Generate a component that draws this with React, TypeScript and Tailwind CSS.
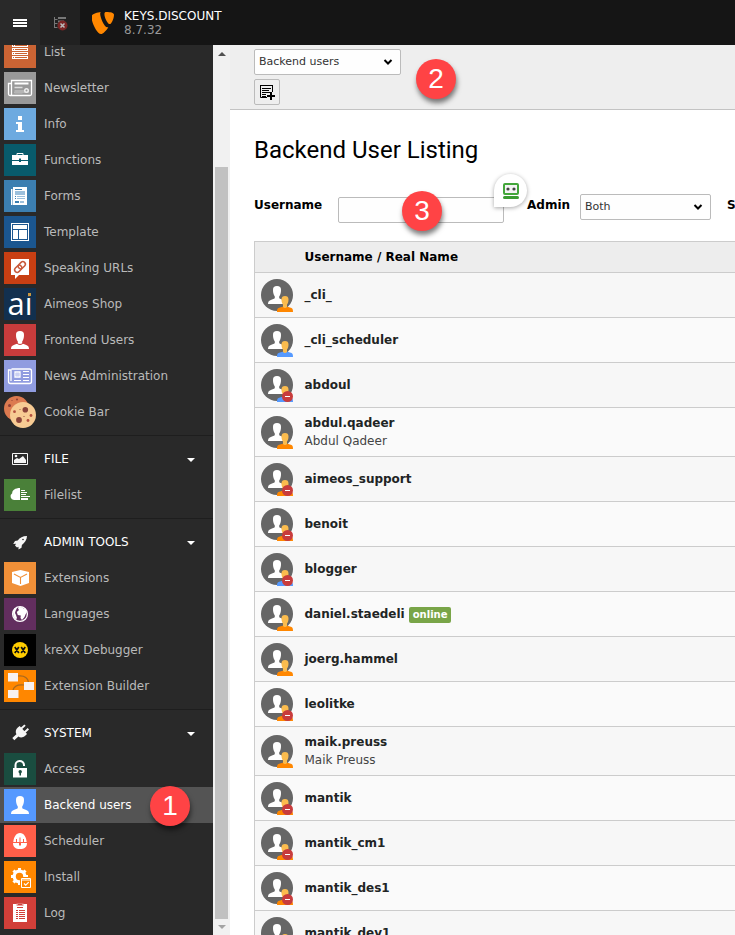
import type { ReactNode } from "react";

type Role = "admin" | "user";

interface BackendUser {
  name: string;
  realName?: string;
  role: Role;
  disabled?: boolean;
  online?: boolean;
}

interface ModuleItem {
  label: string;
  icon: ReactNode;
  active?: boolean;
}

interface ModuleGroup {
  title?: string;
  icon?: ReactNode;
  items: ModuleItem[];
}

const users: BackendUser[] = [
  { name: "_cli_", role: "admin" },
  { name: "_cli_scheduler", role: "user" },
  { name: "abdoul", role: "user", disabled: true },
  { name: "abdul.qadeer", realName: "Abdul Qadeer", role: "admin" },
  { name: "aimeos_support", role: "admin", disabled: true },
  { name: "benoit", role: "admin", disabled: true },
  { name: "blogger", role: "user", disabled: true },
  { name: "daniel.staedeli", role: "admin", online: true },
  { name: "joerg.hammel", role: "admin" },
  { name: "leolitke", role: "admin", disabled: true },
  { name: "maik.preuss", realName: "Maik Preuss", role: "admin" },
  { name: "mantik", role: "admin", disabled: true },
  { name: "mantik_cm1", role: "admin", disabled: true },
  { name: "mantik_des1", role: "admin", disabled: true },
  { name: "mantik_dev1", role: "admin", disabled: true },
];

function Glyph({ bg, children }: { bg?: string; children: ReactNode }) {
  return (
    <svg viewBox="0 0 32 32" className="size-8 shrink-0 overflow-visible" aria-hidden="true">
      {bg && <rect width="32" height="32" fill={bg} />}
      {children}
    </svg>
  );
}

const person =
  "M16 7c-2.800 0-4 1.200-4 3.800 0 1.200.1 2.200.3 3.200.3 1.500.9 2.600 1.500 3.400v1.700c-.7 1-2.300 1.300-4 1.800C7.600 21.600 7 22.800 7 25h18c0-2.200-.6-3.400-2.800-4.100-1.700-.5-3.300-.8-4-1.800v-1.700c.6-.8 1.200-1.900 1.500-3.400.2-1 .3-2 .3-3.200C20 8.200 18.800 7 16 7z";

const groups: ModuleGroup[] = [
  {
    items: [
      {
        label: "List",
        icon: (
          <Glyph bg="#cb6434">
            {[8, 12, 16, 20].map((y) => (
              <g key={y}>
                <rect x="8" y={y} width="16" height="3" fill="#fff" />
                <path d={`M9 ${y + 1.500}h1M11 ${y + 1.500}h12`} stroke="#cb6434" />
              </g>
            ))}
          </Glyph>
        ),
      },
      {
        label: "Newsletter",
        icon: (
          <Glyph bg="#999999">
            <path d="M7.500 8.500h20v13.500q0 1.500-1.500 1.500H7.500zM7.500 11.500h-3V22q0 1.500 1.500 1.500h2" fill="none" stroke="#fff" strokeWidth="1.300" />
            <path d="M10.500 11.500h14" stroke="#fff" strokeWidth="2" />
            <path d="M10.500 15.500h8M10.500 20.500h8" stroke="#ddd" strokeWidth="1.500" />
            <path d="M10.500 18h14v3h-14z" fill="#b5b5b5" />
            <circle cx="22.500" cy="18.500" r="2.500" fill="#eee" />
            <circle cx="22.500" cy="18.500" r="1" fill="#999" />
          </Glyph>
        ),
      },
      {
        label: "Info",
        icon: (
          <Glyph bg="#6daae0">
            <path d="M14 8h4v4h-4zM12 14h6v8h2v2h-8v-2h2v-6h-2z" fill="#fff" />
          </Glyph>
        ),
      },
      {
        label: "Functions",
        icon: (
          <Glyph bg="#085b6b">
            <path d="M13 11V9.500h6V11" fill="none" stroke="#fff" />
            <path d="M8 11h16v5h-7v-1.500h-2V16H8zM8 17h7v1h2v-1h7v4H8z" fill="#fff" />
          </Glyph>
        ),
      },
      {
        label: "Forms",
        icon: (
          <Glyph bg="#3c7fb1">
            <path d="M7 9h1.500v16H7zM9 7h14v18H9z" fill="#fff" />
            <path d="M11 9h7v1h-7zM11 16h1v1h-1zM11 18h1v1h-1zM11 21h4v2h-4z" fill="#3c7fb1" />
            <path d="M11 11h10v4H11zM13 16h8v1h-8zM13 18h8v1h-8zM16 21h4v2h-4z" fill="#9cc0dc" />
          </Glyph>
        ),
      },
      {
        label: "Template",
        icon: (
          <Glyph bg="#1b568f">
            <rect x="7.500" y="7.500" width="17" height="17" fill="none" stroke="#fff" />
            <path d="M9 9h14v4H9zM9 14h5v9H9zM15 14h8v9h-8z" fill="#fff" />
          </Glyph>
        ),
      },
      {
        label: "Speaking URLs",
        icon: (
          <Glyph bg="#c83f13">
            <path d="M7 7h18v16h-10l-4 4v-4H7z" fill="#fff" />
            <g fill="none" stroke="#c8593a" strokeWidth="1.500" transform="rotate(-45 16 15)">
              <rect x="9.500" y="12.500" width="8" height="5" rx="2.500" />
              <rect x="14.500" y="12.500" width="8" height="5" rx="2.500" />
            </g>
          </Glyph>
        ),
      },
      {
        label: "Aimeos Shop",
        icon: (
          <Glyph bg="#12304f">
            <text x="3.500" y="27" fill="#fff" fontSize="31" fontFamily="Open Sans, sans-serif">
              ai
            </text>
            <rect x="22" y="2" width="7" height="6.500" fill="#12304f" />
            <rect x="24" y="5" width="3" height="3" fill="#c9973f" />
          </Glyph>
        ),
      },
      {
        label: "Frontend Users",
        icon: (
          <Glyph bg="#c83c3c">
            <path d={person} fill="#fff" />
            <path d="M12 18.500q4 4 8 0" fill="none" stroke="#c83c3c" />
          </Glyph>
        ),
      },
      {
        label: "News Administration",
        icon: (
          <Glyph bg="#909ce0">
            <path d="M7.500 9h18q2 0 2 2v10.500q0 2-2 2h-19q-2 0-2-2V10H7v11" fill="none" stroke="#fff" strokeWidth="1.300" />
            <path d="M11 12h5v5h-5z" fill="none" stroke="#fff" strokeWidth="1.300" />
            <path d="M12 13h3v3h-3z" fill="#c9cff3" />
            <path d="M19 11.500h6M19 14.500h6M19 17.500h6M10 20.500h7M19 20.500h6" stroke="#fff" strokeWidth="1.200" />
          </Glyph>
        ),
      },
      {
        label: "Cookie Bar",
        icon: (
          <Glyph>
            <circle cx="12.500" cy="12.500" r="12.500" fill="#dc7a50" />
            <g fill="#8e3f35">
              <circle cx="5.500" cy="9.500" r="1.500" />
              <circle cx="13" cy="3.500" r="1" />
              <circle cx="8" cy="4.500" r=".6" />
            </g>
            <circle cx="19" cy="19" r="13" fill="#f7cb93" />
            <g fill="#8b443a">
              <circle cx="21.300" cy="13.700" r="2.800" />
              <circle cx="15" cy="24" r="2.900" />
              <circle cx="20" cy="20.500" r=".6" />
              <circle cx="16" cy="13.500" r=".5" />
            </g>
            <g fill="#b4503f">
              <circle cx="10.500" cy="15.700" r="1.400" />
              <circle cx="27" cy="19.500" r="1.400" />
              <circle cx="24" cy="24.500" r="1.400" />
            </g>
          </Glyph>
        ),
      },
    ],
  },
  {
    title: "FILE",
    icon: (
      <Glyph>
        <path d="M8.500 10.500h15v11h-15z" fill="none" stroke="#f5f5f5" />
        <path d="M10 20v-3l3-2 2 1 4-3 3 4v3z" fill="#f5f5f5" />
        <circle cx="12" cy="13" r="1.300" fill="#f5f5f5" />
      </Glyph>
    ),
    items: [
      {
        label: "Filelist",
        icon: (
          <Glyph bg="#4a8039">
            <path d="M16 21h-6a3.700 3.700 0 0 1-1.800-6.800c0-3 3-5.200 7.800-5.200z" fill="#fff" />
            <path d="M17 11.500h4M17 13.500h6M17 15.500h5M17 17.500h9M17 19.500h7" stroke="#fff" />
            <path d="M17 20h7v1h-7z" fill="#fff" />
          </Glyph>
        ),
      },
    ],
  },
  {
    title: "ADMIN TOOLS",
    icon: (
      <Glyph>
        <path d="M23 10c-4.500 0-7 1.500-9.300 4.600l-2.700.4L9.200 18l2.800-.2-1 1.700 2 2 1.500-.8V23.500l3-1.800.4-2.800C21 16.500 22.800 14 23 10z" fill="#f5f5f5" />
        <circle cx="19" cy="13.500" r=".8" fill="#292929" />
      </Glyph>
    ),
    items: [
      {
        label: "Extensions",
        icon: (
          <Glyph bg="#f09038">
            <path d="M16.500 8 25 10v11l-8.500 3L8 21V10z" fill="#fff" />
            <path d="M10 12l6.500 3.500L23 12M16.500 15.500V22" fill="none" stroke="#f09038" strokeWidth="1.100" />
          </Glyph>
        ),
      },
      {
        label: "Languages",
        icon: (
          <Glyph bg="#622e5f">
            <circle cx="16" cy="16" r="7.400" fill="none" stroke="#fff" strokeWidth="1.300" />
            <path d="M15 9l3.500.2 1 1.300 2.500 1 .8 2.500-1.300 2.500-1 2.500-2.500 3-1.500-2 .3-2.500-3-.5-1-3 2.200-2-1-1.500zM9 13l1.500-2.500L13 10l-1.500 3L11 15l1 2 1 3-1 1.500L9.500 19z" fill="#fff" />
          </Glyph>
        ),
      },
      {
        label: "kreXX Debugger",
        icon: (
          <Glyph bg="#000000">
            <circle cx="16" cy="16" r="8" fill="#fc0" />
            <path d="M10.800 13l4 6M14.800 13l-4 6M17.200 13l4 6M21.200 13l-4 6" stroke="#111" strokeWidth="1.700" />
          </Glyph>
        ),
      },
      {
        label: "Extension Builder",
        icon: (
          <Glyph bg="#ff8700">
            <path d="M14 6q9-1 10.500 6M9 20q1.500-6 11-5" fill="none" stroke="#a8691f" strokeWidth="1.200" />
            <path d="M4 3h10v8.500H4zM20 12h10v8H20zM4 20h10.500v8H4z" fill="#f7f1f0" />
          </Glyph>
        ),
      },
    ],
  },
  {
    title: "SYSTEM",
    icon: (
      <Glyph>
        <g transform="rotate(48 16 16)" fill="#f5f5f5">
          <path d="M12.500 7h2v5h-2zM17.500 7h2v5h-2zM10.500 11.500h11v2.500c0 3-1.700 5-4 5.500V25h-3v-5.500c-2.300-.5-4-2.500-4-5.500z" />
        </g>
      </Glyph>
    ),
    items: [
      {
        label: "Access",
        icon: (
          <Glyph bg="#1a4d40">
            <path d="M11.500 15v-2.500a4 4 0 0 1 8.500-.5v1" fill="none" stroke="#fff" strokeWidth="2" />
            <path d="M9 15h14v9.500H9z" fill="#fff" />
            <path d="M15.500 20h1.500v2.500h-1.500z" fill="#1a4d40" />
            <circle cx="16.200" cy="18.800" r="1.700" fill="#1a4d40" />
          </Glyph>
        ),
      },
      {
        label: "Backend users",
        active: true,
        icon: (
          <Glyph bg="#5599ff">
            <path d={person} fill="#fff" />
          </Glyph>
        ),
      },
      {
        label: "Scheduler",
        icon: (
          <Glyph bg="#ff5f49">
            <path d="M16 8c4 0 6.200 4 6.700 9H9.300C9.800 12 12 8 16 8zM9 18h6v2.500h2V18h6c0 4-2.500 6-7 6s-7-2-7-6z" fill="#fff" />
            <path d="M12.500 14v3M16 12.500v4.500M19.500 14v3" stroke="#ff5f49" />
          </Glyph>
        ),
      },
      {
        label: "Install",
        icon: (
          <Glyph bg="#ff8700">
            <circle cx="15.500" cy="15.500" r="5.300" fill="none" stroke="#fff" strokeWidth="3.200" />
            <g stroke="#fff" strokeWidth="3">
              {[0, 45, 90, 135].map((a) => (
                <path key={a} d="M15.500 7v3M15.500 21v3" transform={`rotate(${a} 15.500 15.500)`} />
              ))}
            </g>
            <path d="M16 16h16v16H16z" fill="#ff8700" />
            <path d="M17.500 17.500h9v9h-9zM17.500 19h9" fill="none" stroke="#fff" />
            <path d="M20 22.500l1.700 1.700 3-3" fill="none" stroke="#fff" strokeWidth="1.200" />
          </Glyph>
        ),
      },
      {
        label: "Log",
        icon: (
          <Glyph bg="#d13f39">
            <path d="M9 7h14v18H9z" fill="#fff" />
            <path d="M12.500 6.500h7V9h-7z" fill="#e99c98" />
            <path d="M14 7h4v1h-4z" fill="#d13f39" />
            <path d="M12 13.500h2M15 13.500h6M12 15.500h2M15 15.500h6M12 17.500h2M15 17.500h6M12 19.500h2M15 19.500h6M12 21.500h2M15 21.500h6M13 10.500h6" stroke="#d13f39" />
          </Glyph>
        ),
      },
    ],
  },
];

function ModuleMenu() {
  return (
    <nav aria-label="Modules" className="-mt-[11px] w-[213px] shrink-0 bg-[#292929]">
      {groups.map((group, i) => (
        <div key={i} className={group.title ? "border-t border-[#1e1e1e] py-[5px]" : "pb-[5px]"}>
          {group.title && (
            <button type="button" className="flex h-9 w-full items-center gap-2 pr-[18px] pl-1 text-left text-white">
              {group.icon}
              <span className="grow">{group.title}</span>
              <span className="mt-0.5 border-x-4 border-t-4 border-x-transparent border-t-white" />
            </button>
          )}
          <ul>
            {group.items.map((item) => (
              <li key={item.label}>
                <a
                  href="#"
                  className={
                    item.active
                      ? "flex h-9 items-center gap-2 bg-[#545454] pl-1 text-white"
                      : "flex h-9 items-center gap-2 pl-1 text-[#bababa]"
                  }
                >
                  {item.icon}
                  {item.label}
                </a>
              </li>
            ))}
          </ul>
        </div>
      ))}
    </nav>
  );
}

function MenuScrollbar() {
  return (
    <div className="flex w-[17px] shrink-0 flex-col items-center bg-[#f1f1f1] py-1.5" aria-hidden="true">
      <span className="mt-px border-x-4 border-b-4 border-x-transparent border-b-[#505050]" />
      <span className="mt-[111px] w-[13px] grow bg-[#c1c1c1]" />
      <span className="mt-1.5 border-x-4 border-t-4 border-x-transparent border-t-[#a3a3a3]" />
    </div>
  );
}

function TopBar() {
  return (
    <header className="flex h-[45px] shrink-0 bg-[#151515]">
      <button type="button" aria-label="Toggle module menu" className="flex w-10 items-center justify-center bg-[#292929]">
        <svg viewBox="0 0 14 8" className="h-2 w-3.5">
          <path d="M0 1h14M0 4h14M0 7h14" stroke="#fff" strokeWidth="2" />
        </svg>
      </button>
      <button type="button" aria-label="Toggle page tree" className="flex w-10 items-center justify-center bg-[#212121]">
        <svg viewBox="0 0 16 16" className="size-4" fill="none">
          <path d="M2.500 2v11M2.500 4.500h3M2.500 8.500h3M2.500 12.500h3" stroke="#777" />
          <path d="M6 3h8M6 6.500h6" stroke="#777" strokeWidth="2" />
          <circle cx="10.500" cy="10.500" r="5" fill="#7a2525" />
          <path d="M8.500 8.500l4 4M12.500 8.500l-4 4" stroke="#bbb" strokeWidth="1.500" />
        </svg>
      </button>
      <a href="#" className="flex items-center gap-2.5 pl-3 text-white">
        <svg viewBox="0 0 22 22" className="size-[22px]" fill="#ff8700" aria-hidden="true">
          <path d="M16.300 15.200c-.4.100-.6.100-1 .1-2.900 0-7.100-10-7.100-13.400C8.200.700 8.500.3 8.900 0 5.300.4 1 1.700 0 3.300c-.3.400-.5 1-.5 1.800C-.5 10.400 5 22 9 22c1.900 0 5-3 7.300-6.800M14.500 0C18.200 0 22 .6 22 2.700c0 4.200-2.700 9.400-4.100 9.400-2.500 0-5.500-6.800-5.500-10.200 0-1.500.6-1.900 2.100-1.900" />
        </svg>
        <span className="flex flex-col leading-[14px]">
          <span>KEYS.DISCOUNT</span>
          <span className="text-[#999999]">8.7.32</span>
        </span>
      </a>
    </header>
  );
}

function SelectBox({ id, value, label, width }: { id: string; value: string; label?: string; width: string }) {
  return (
    <div className={`relative shrink-0 ${width}`}>
      <select
        id={id}
        aria-label={label}
        defaultValue={value}
        className="h-[26px] w-full appearance-none rounded-xs border border-[#bbbbbb] bg-[#fefefe] px-1 text-[11px] font-normal text-[#333]"
      >
        <option>{value}</option>
      </select>
      <svg viewBox="0 0 10 6" className="pointer-events-none absolute top-[10px] right-2 h-1.5 w-2.5" fill="none">
        <path d="M1.500 1 5 4.500 8.500 1" stroke="#000" strokeWidth="2" />
      </svg>
    </div>
  );
}

function DocHeader() {
  return (
    <div className="flex h-[65px] flex-col gap-1 border-b border-[#c3c3c3] bg-[#eeeeee] px-6 pt-1">
      <SelectBox id="view" label="View" value="Backend users" width="w-[147px]" />
      <button
        type="button"
        aria-label="Create new backend user"
        className="flex size-[26px] items-center justify-center rounded-xs border border-[#bbbbbb] bg-[#eeeeee]"
      >
        <svg viewBox="0 0 16 16" className="size-4" fill="none" stroke="#000">
          <path d="M13.500 8V1.500h-12v12H8" />
          <path d="M1 1.500h13" strokeWidth="1" />
          <path d="M3 4.500h9M3 6.500h7M3 8.500h8M3 10.500h4M3 12.500h4" />
          <path d="M12 8v8M8 12h8" strokeWidth="2" />
        </svg>
      </button>
    </div>
  );
}

function PasswordManagerBadge() {
  return (
    <div className="absolute -top-[23px] -right-[23px] flex size-[33px] items-center justify-center rounded-full rounded-bl-none bg-white shadow-[0_1px_4px_rgba(0,0,0,0.35)]">
      <svg viewBox="0 0 16 16" className="size-4" aria-hidden="true">
        <rect x="1" y="1" width="14" height="10" rx="1" fill="#f4f4f4" stroke="#43a63a" strokeWidth="2" />
        <circle cx="5" cy="6" r="1.600" fill="#444" />
        <circle cx="11" cy="6" r="1.600" fill="#444" />
        <rect y="13" width="16" height="3" rx="1.500" fill="#3a9c31" />
      </svg>
    </div>
  );
}

function FilterForm() {
  return (
    <form className="flex h-[47px] items-start font-bold whitespace-nowrap text-black">
      <label htmlFor="username" className="mt-[3px] w-[84px] shrink-0 leading-4">
        Username
      </label>
      <div className="relative mt-[3px] w-[166px] shrink-0">
        <input id="username" type="text" className="block h-[26px] w-full rounded-xs border border-[#bbbbbb] bg-[#fefefe] px-1 font-normal" />
        <PasswordManagerBadge />
        <Marker digit="3" place="-top-1.5 left-[64px]" />
      </div>
      <label htmlFor="admin" className="mt-[3px] ml-[23px] w-[53px] shrink-0 leading-4">
        Admin
      </label>
      <SelectBox id="admin" value="Both" width="w-[131px]" />
      <label htmlFor="status" className="mt-[3px] ml-4 w-14 shrink-0 leading-4">
        Status
      </label>
      <SelectBox id="status" value="Both" width="w-[131px]" />
    </form>
  );
}

function Avatar({ role, disabled }: { role: Role; disabled?: boolean }) {
  return (
    <svg viewBox="0 0 32 33" className="h-[33px] w-8" aria-hidden="true">
      <circle cx="16" cy="16" r="16" fill="#666" />
      <path d={person} fill="#fff" />
      <path d="M16 33c0-3 .5-4 3-4.500l2.500-.8h5l2.500.8c2.500.5 3 1.500 3 4.500z" fill={role === "admin" ? "#ff8700" : "#5599ff"} />
      <path d="M24 17c-2.300 0-3.500 1-3.500 3.500 0 2.500.7 4 1.500 5V28c1 1.300 3 1.300 4 0v-2.500c.8-1 1.500-2.500 1.500-5 0-2.500-1.200-3.500-3.500-3.500z" fill="#fbbc4e" />
      {disabled && (
        <>
          <circle cx="26.500" cy="27.500" r="5.500" fill="#c83c3c" />
          <path d="M24 27.500h5" stroke="#fff" />
        </>
      )}
    </svg>
  );
}

function UserTable() {
  return (
    <table className="w-full border-collapse border-y border-l border-[#cccccc] text-left text-[#212424]">
      <thead>
        <tr className="h-[31px] border-b border-[#cccccc] bg-[#ededed]">
          <th className="w-[50px]" />
          <th className="font-bold text-black">Username / Real Name</th>
        </tr>
      </thead>
      <tbody>
        {users.map((user) => (
          <tr
            key={user.name}
            className={
              user.realName
                ? "h-[49px] border-b border-[#cccccc] odd:bg-[#f7f7f7] even:bg-[#fafafa]"
                : "h-[45px] border-b border-[#cccccc] odd:bg-[#f7f7f7] even:bg-[#fafafa]"
            }
          >
            <td className="pl-1.5">
              <Avatar role={user.role} disabled={user.disabled} />
            </td>
            <td className="leading-[18px]">
              <span className="flex items-center gap-1">
                <b>{user.name}</b>
                {user.online && (
                  <span className="mt-0.5 rounded-xs bg-[#79a548] px-1 text-[10px] leading-4 font-bold text-white">online</span>
                )}
              </span>
              <span className="text-[#444]">{user.realName}</span>
            </td>
          </tr>
        ))}
      </tbody>
    </table>
  );
}

function Marker({ digit, place }: { digit: string; place: string }) {
  return (
    <span
      className={`absolute ${place} z-10 flex size-10 items-center justify-center rounded-full bg-[#ff4345] font-['Liberation_Sans',Arial,sans-serif] text-[28px] leading-none font-normal text-white shadow-[1px_4px_5px_rgba(0,0,0,0.5)]`}
    >
      {digit}
    </span>
  );
}

export default function App() {
  return (
    <div className="relative flex h-screen flex-col overflow-hidden bg-white font-['DejaVu_Sans',Verdana,sans-serif] text-xs">
      <TopBar />
      <div className="flex min-h-0 grow">
        <div className="relative flex shrink-0 overflow-hidden bg-[#292929]">
          <ModuleMenu />
          <MenuScrollbar />
          <Marker digit="1" place="top-[741px] left-[150px]" />
        </div>
        <main className="relative min-w-0 grow overflow-hidden">
          <DocHeader />
          <Marker digit="2" place="top-3.5 left-[186px]" />
          <div className="pt-6 pl-6">
            <h1 className="mb-[28px] font-[Roboto,sans-serif] text-2xl text-black">Backend User Listing</h1>
            <FilterForm />
            <UserTable />
          </div>
        </main>
      </div>
    </div>
  );
}
